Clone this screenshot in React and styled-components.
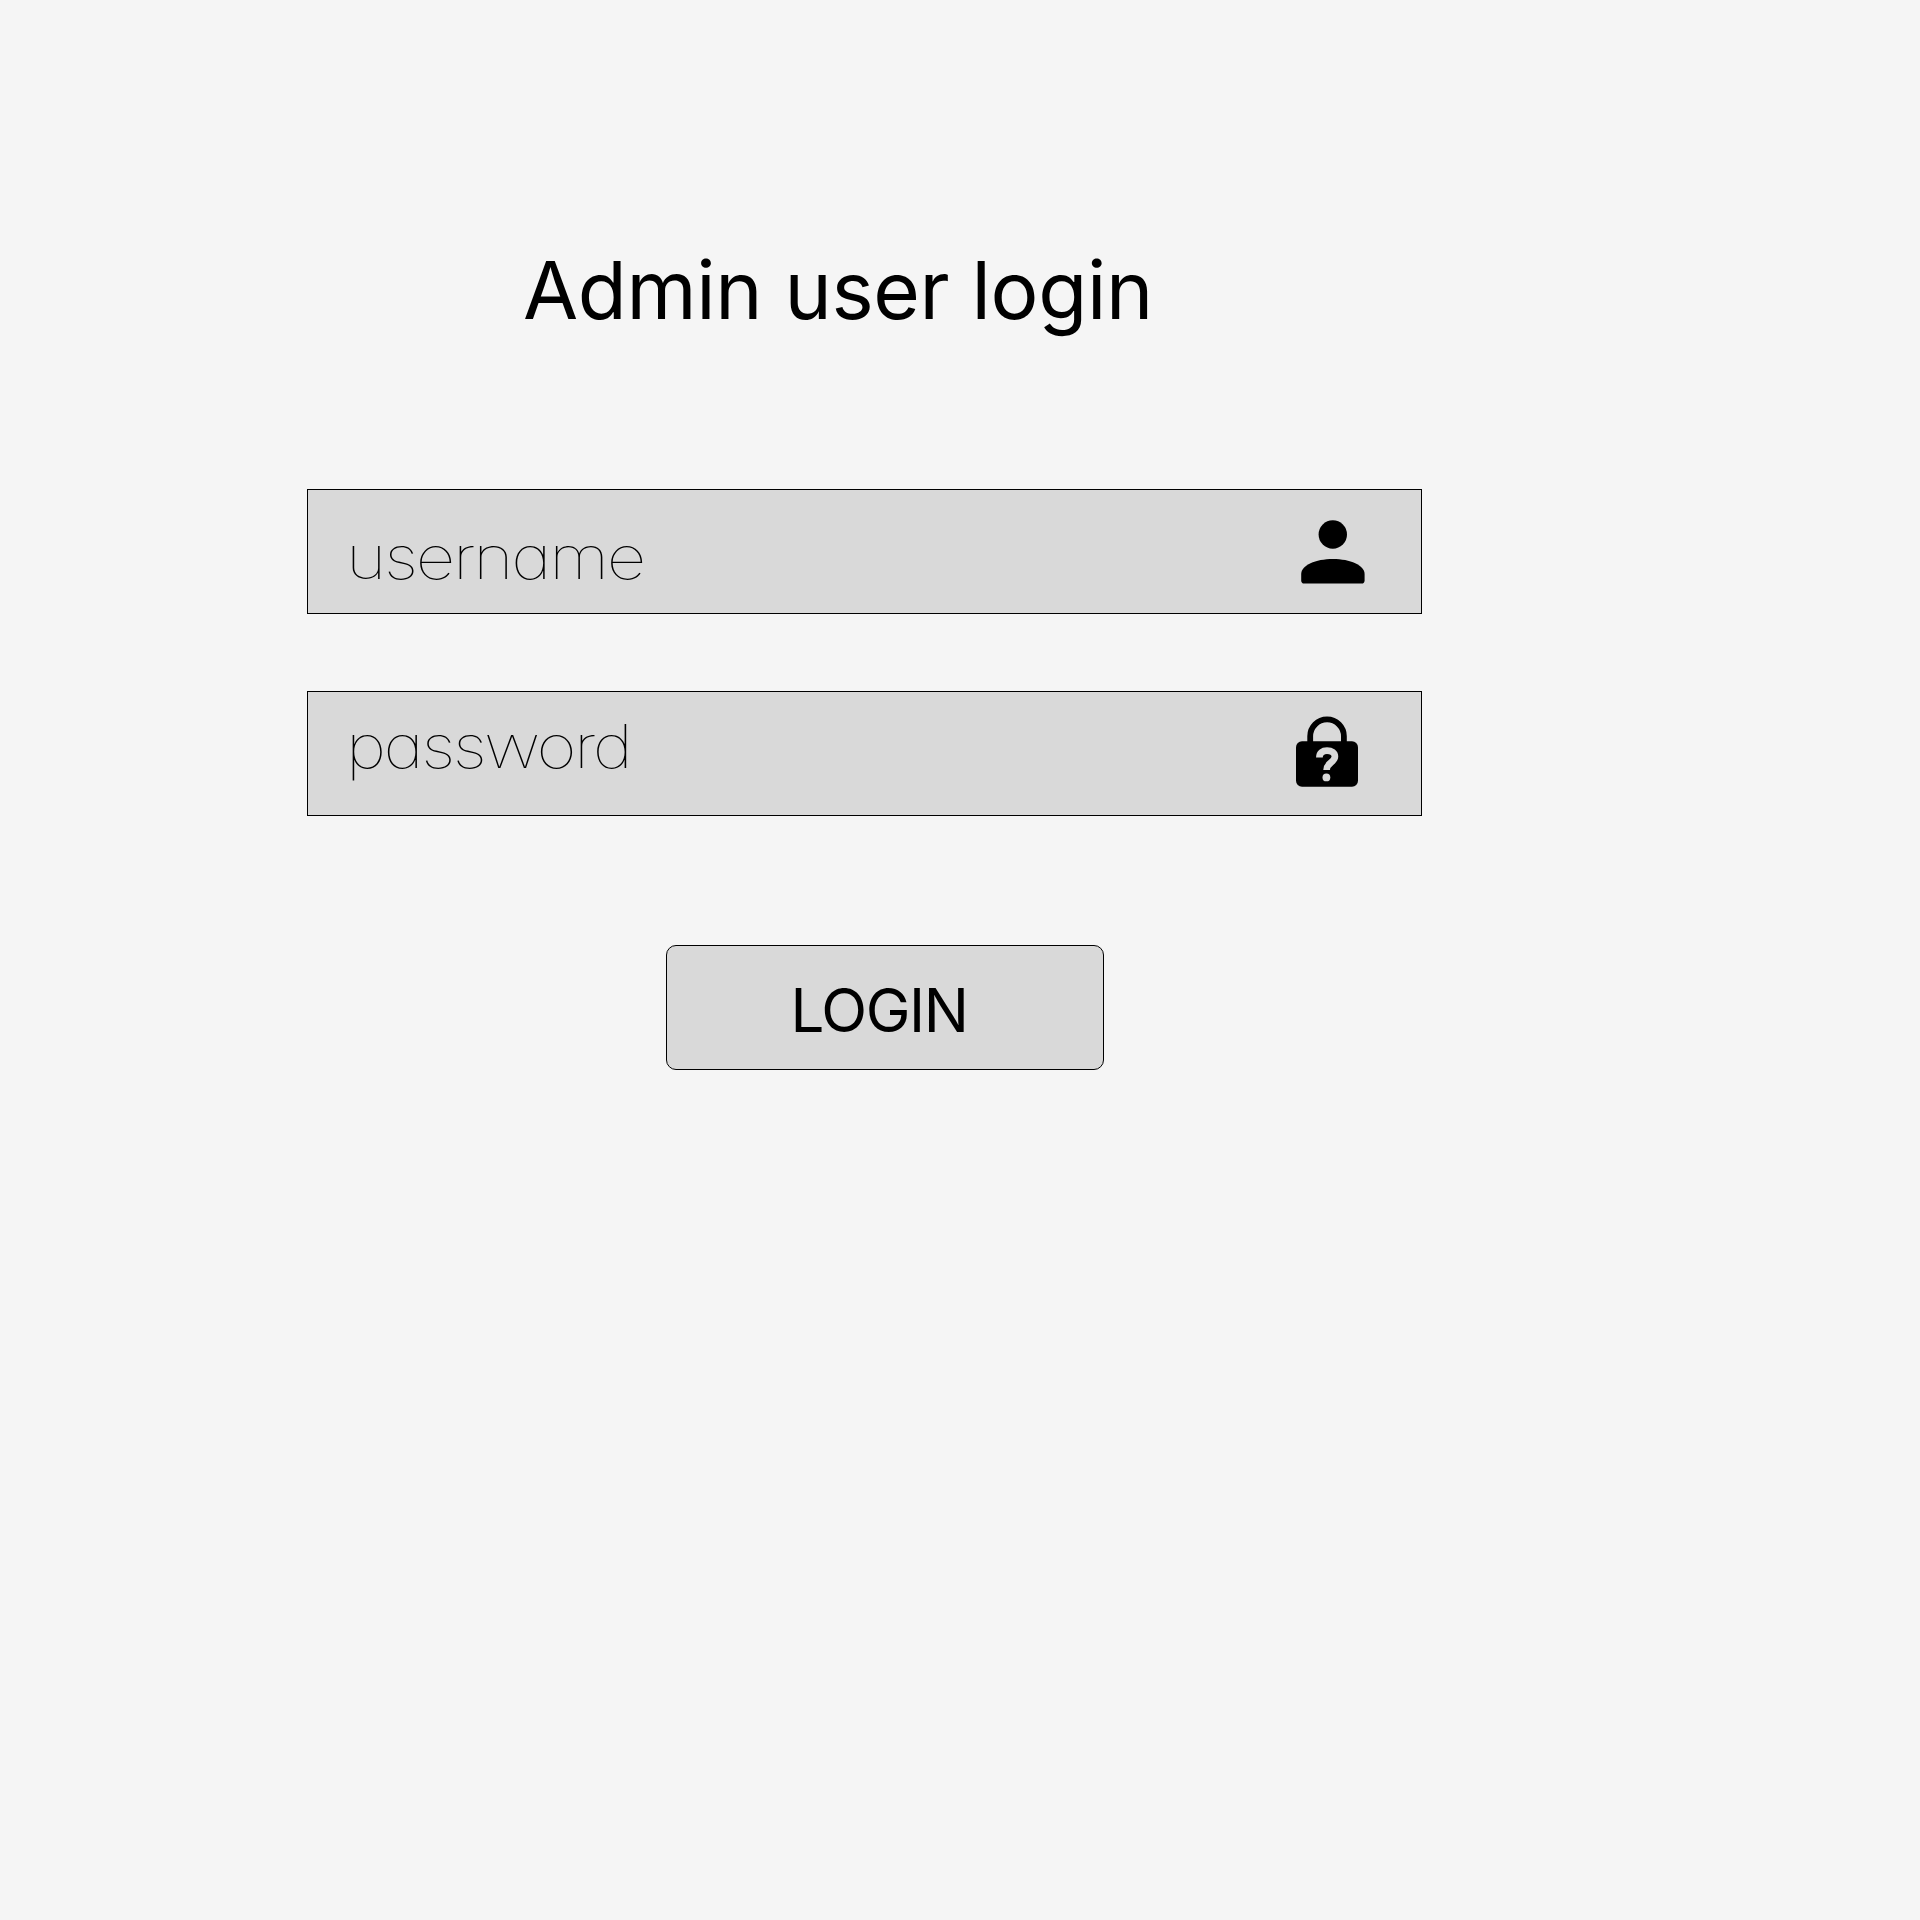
import React from "react";
import styled, { createGlobalStyle } from "styled-components";

const GlobalStyle = createGlobalStyle`
  *, *::before, *::after { box-sizing: border-box; }
  body { margin: 0; background: #f5f5f5; color: #000; font-family: Inter, "Liberation Sans", sans-serif; }
`;

const Page = styled.main`
  display: flex;
  flex-direction: column;
  align-items: flex-start;
  min-height: 1920px;
  padding: 241px 0 0 307px;
`;

const Title = styled.h1`
  margin: 0 0 151px 216px;
  font-size: 80px;
  font-weight: 400;
  line-height: 97px;
  letter-spacing: -0.33px;
  white-space: nowrap;
`;

const Form = styled.div`
  display: flex;
  flex-direction: column;
  width: 1115px;
`;

const Field = styled.div`
  display: flex;
  justify-content: space-between;
  align-items: flex-start;
  height: 125px;
  margin-bottom: ${(p) => p.$gap}px;
  padding: 0 ${(p) => p.$right}px 0 38px;
  background: #d9d9d9;
  border: 1px solid #000;
`;

/* Hairline, single-storey lettering, slightly extended. */
const Hint = styled.span`
  margin-top: ${(p) => p.$top}px;
  font-size: 60px;
  font-weight: 100;
  line-height: 72px;
  letter-spacing: ${(p) => p.$tracking}px;
  font-feature-settings: "cv11" 1;
  white-space: nowrap;
  transform: scaleX(1.15);
  transform-origin: 0 0;
`;

const Icon = styled.svg`
  display: block;
  flex: none;
  margin-top: ${(p) => p.$top}px;
`;

const LoginButton = styled.button`
  align-self: flex-start;
  width: 438px;
  height: 125px;
  margin-left: 359px;
  padding: 5px 12px 0 0;
  background: #d9d9d9;
  border: 1px solid #000;
  border-radius: 10px;
  color: #000;
  font-family: inherit;
  font-size: 60px;
  line-height: 72px;
  letter-spacing: -1.4px;
`;

function PersonIcon() {
  return (
    <Icon $top={30} width="64" height="64" viewBox="0 0 64 64">
      <circle cx="31.8" cy="14.5" r="14.2" />
      <path d="M0.2 54C0.2 45.3 14.5 39 31.9 39C49.3 39 63.6 45.3 63.6 54V60.5Q63.6 63.6 60.5 63.6H3.3Q0.2 63.6 0.2 60.5Z" />
    </Icon>
  );
}

function LockIcon() {
  return (
    <Icon $top={24} width="62" height="71" viewBox="0 0 62 71">
      <path d="M14.2 27V20A16.85 16.85 0 0 1 47.9 20V27" fill="none" stroke="#000" strokeWidth="5.8" transform="translate(0 .3)" />
      <rect x="0" y="25.3" width="62" height="45.4" rx="6" />
      <path d="M23.4 41.5C23.4 36.8 26.6 34.6 31 34.6C35.8 34.6 38.9 36.9 38.9 40.6C38.9 46.5 30.6 46.5 30.6 54" fill="none" stroke="#d9d9d9" strokeWidth="6.7" />
      <circle cx="30.4" cy="61.4" r="3.9" fill="#d9d9d9" />
    </Icon>
  );
}

export default function App() {
  return (
    <>
      <GlobalStyle />
      <Page>
        <Title>Admin user login</Title>
        <Form>
          <Field $gap={77} $right={56}>
            <Hint $top={31} $tracking={-1.95}>username</Hint>
            <PersonIcon />
          </Field>
          <Field $gap={129} $right={63}>
            <Hint $top={18} $tracking={-2.15}>password</Hint>
            <LockIcon />
          </Field>
          <LoginButton>LOGIN</LoginButton>
        </Form>
      </Page>
    </>
  );
}
